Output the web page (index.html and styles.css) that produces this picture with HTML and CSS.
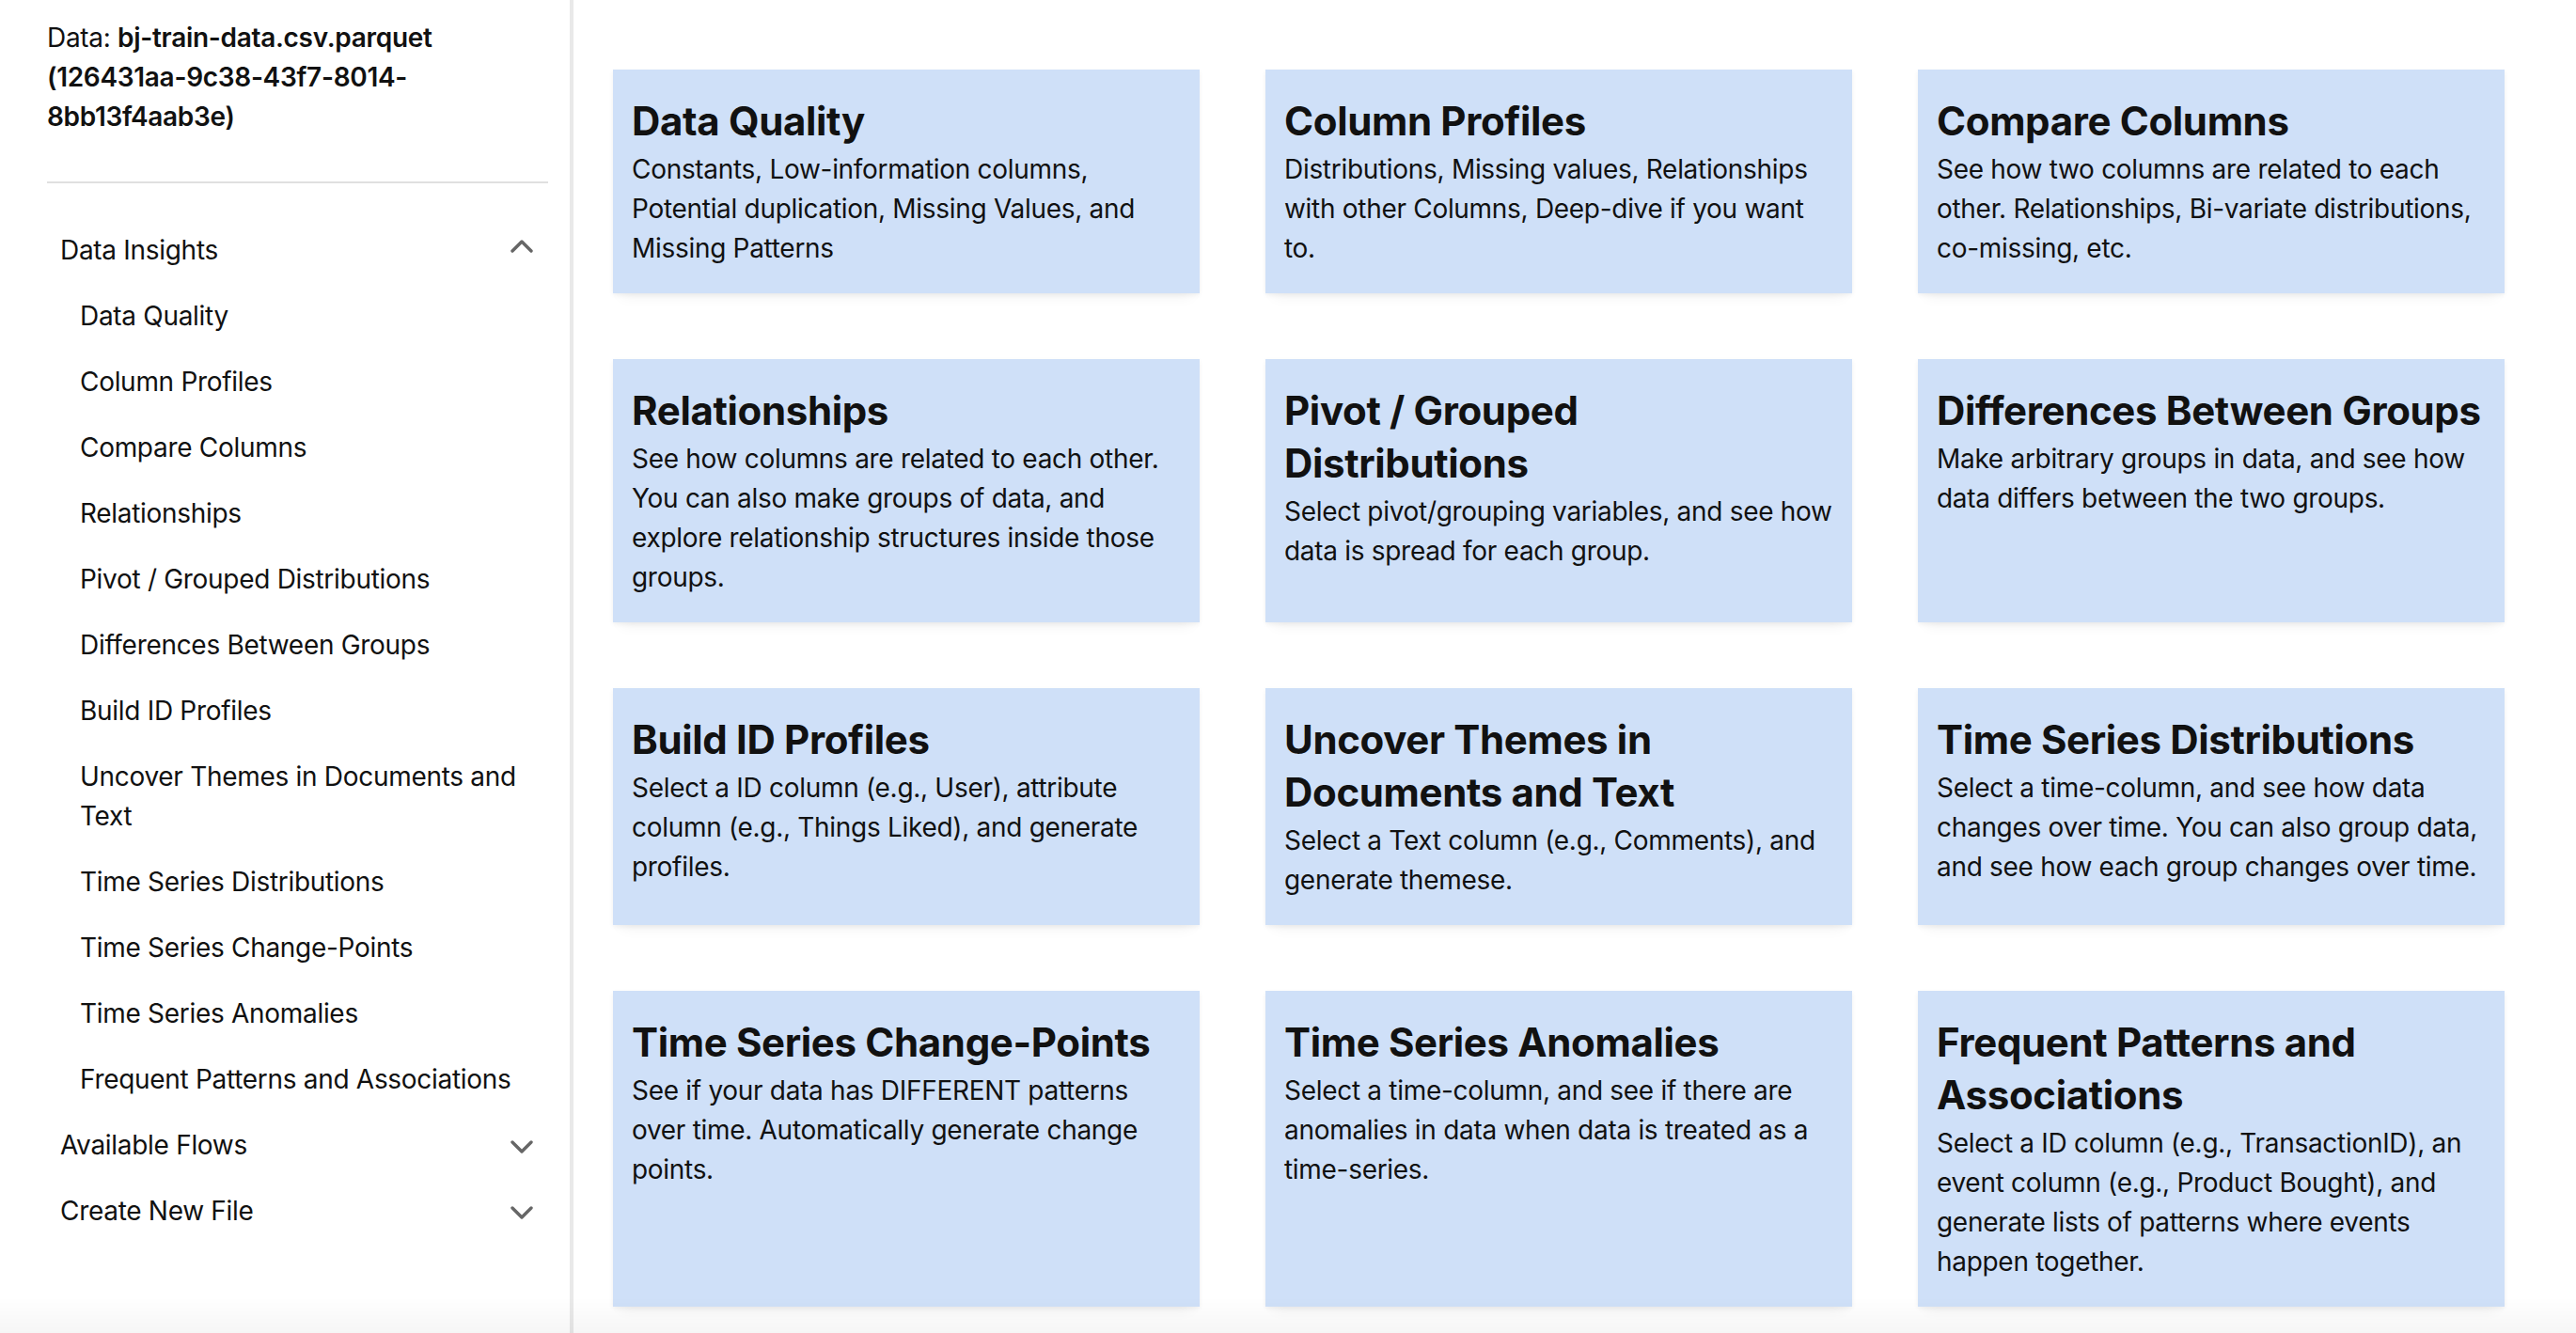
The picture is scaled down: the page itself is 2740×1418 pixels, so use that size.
FILE: index.html
```html
<!DOCTYPE html>
<html lang="en">
<head>
<meta charset="utf-8">
<title>Data Insights</title>
<link rel="stylesheet" href="styles.css">
</head>
<body>
<div class="app">
  <aside class="sidebar">
    <div class="data-info">Data: <strong>bj-train-data.csv.parquet (126431aa-9c38-43f7-8014-8bb13f4aab3e)</strong></div>
    <div class="divider"></div>
    <nav class="nav">
      <div class="nav-link">
        <span class="nav-label">Data Insights</span>
        <svg class="chev chev-up" viewBox="0 0 24 14" width="24" height="14"><polyline points="2,12 12,2 22,12"/></svg>
      </div>
      <div class="nav-children">
        <div class="nav-link child">Data Quality</div>
        <div class="nav-link child">Column Profiles</div>
        <div class="nav-link child">Compare Columns</div>
        <div class="nav-link child">Relationships</div>
        <div class="nav-link child">Pivot / Grouped Distributions</div>
        <div class="nav-link child">Differences Between Groups</div>
        <div class="nav-link child">Build ID Profiles</div>
        <div class="nav-link child">Uncover Themes in Documents and Text</div>
        <div class="nav-link child">Time Series Distributions</div>
        <div class="nav-link child">Time Series Change-Points</div>
        <div class="nav-link child">Time Series Anomalies</div>
        <div class="nav-link child">Frequent Patterns and Associations</div>
      </div>
      <div class="nav-link">
        <span class="nav-label">Available Flows</span>
        <svg class="chev chev-down" viewBox="0 0 24 14" width="24" height="14"><polyline points="2,2 12,12 22,2"/></svg>
      </div>
      <div class="nav-link">
        <span class="nav-label">Create New File</span>
        <svg class="chev chev-down" viewBox="0 0 24 14" width="24" height="14"><polyline points="2,2 12,12 22,2"/></svg>
      </div>
    </nav>
  </aside>
  <main class="main">
    <div class="grid">
      <div class="card">
        <h3 class="card-title">Data Quality</h3>
        <p class="card-text">Constants, Low-information columns, Potential duplication, Missing Values, and Missing Patterns</p>
      </div>
      <div class="card">
        <h3 class="card-title">Column Profiles</h3>
        <p class="card-text">Distributions, Missing values, Relationships with other Columns, Deep-dive if you want to.</p>
      </div>
      <div class="card">
        <h3 class="card-title">Compare Columns</h3>
        <p class="card-text">See how two columns are related to each other. Relationships, Bi-variate distributions, co-missing, etc.</p>
      </div>
      <div class="card">
        <h3 class="card-title">Relationships</h3>
        <p class="card-text">See how columns are related to each other. You can also make groups of data, and explore relationship structures inside those groups.</p>
      </div>
      <div class="card">
        <h3 class="card-title">Pivot / Grouped<br>Distributions</h3>
        <p class="card-text">Select pivot/grouping variables, and see how data is spread for each group.</p>
      </div>
      <div class="card">
        <h3 class="card-title">Differences Between Groups</h3>
        <p class="card-text">Make arbitrary groups in data, and see how data differs between the two groups.</p>
      </div>
      <div class="card">
        <h3 class="card-title">Build ID Profiles</h3>
        <p class="card-text">Select a ID column (e.g., User), attribute column (e.g., Things Liked), and generate profiles.</p>
      </div>
      <div class="card">
        <h3 class="card-title">Uncover Themes in Documents and Text</h3>
        <p class="card-text">Select a Text column (e.g., Comments), and generate themese.</p>
      </div>
      <div class="card">
        <h3 class="card-title">Time Series Distributions</h3>
        <p class="card-text">Select a time-column, and see how data changes over time. You can also group data, and see how each group changes over time.</p>
      </div>
      <div class="card">
        <h3 class="card-title">Time Series Change-Points</h3>
        <p class="card-text">See if your data has DIFFERENT patterns over time. Automatically generate change points.</p>
      </div>
      <div class="card">
        <h3 class="card-title">Time Series Anomalies</h3>
        <p class="card-text">Select a time-column, and see if there are anomalies in data when data is treated as a time-series.</p>
      </div>
      <div class="card">
        <h3 class="card-title">Frequent Patterns and Associations</h3>
        <p class="card-text">Select a ID column (e.g., TransactionID), an event column (e.g., Product Bought), and generate lists of patterns where events happen together.</p>
      </div>
    </div>
  </main>
</div>
<div class="bottom-fade"></div>
</body>
</html>
```

FILE: styles.css
```css
* {
  box-sizing: border-box;
}

html, body {
  margin: 0;
  padding: 0;
  height: 100%;
  background: #ffffff;
}

body {
  font-family: Inter, "Noto Sans", "Liberation Sans", sans-serif;
  font-size: 28px;
  line-height: 42px;
  letter-spacing: -0.3px;
  color: #111111;
  overflow: hidden;
}

.app {
  display: flex;
  min-height: 100vh;
}

/* Sidebar */
.sidebar {
  width: 610px;
  flex: 0 0 610px;
  border-right: 4px solid #e9e9e9;
  padding: 19px 23px 0 50px;
  min-height: 100vh;
}

.data-info {
  font-weight: 400;
}

.data-info strong {
  font-weight: 600;
}

.divider {
  height: 2px;
  background: #e0e0e0;
  margin-top: 48px;
}

.nav {
  margin-top: 36px;
}

.nav-link {
  display: flex;
  align-items: center;
  justify-content: space-between;
  padding: 14px 16px 14px 14px;
  color: #111111;
}

.nav-link.child {
  padding-left: 35px;
  padding-right: 21px;
}

.nav-label {
  flex: 1;
}

.chev {
  flex: 0 0 24px;
  fill: none;
  stroke: #666666;
  stroke-width: 3.4;
  stroke-linecap: round;
  stroke-linejoin: round;
}

.chev-up {
  transform: translateY(-4px);
}

.chev-down {
  transform: translateY(2px);
}

/* Main */
.main {
  flex: 1;
  padding: 74px 76px 0 42px;
}

.grid {
  display: grid;
  grid-template-columns: repeat(3, 624px);
  column-gap: 70px;
  row-gap: 70px;
  align-items: stretch;
}

.card {
  background: #cfe0f8;
  padding: 27px 20px 27px 20px;
  box-shadow: 0 2px 5px rgba(0, 0, 0, 0.06), 0 12px 14px -9px rgba(0, 0, 0, 0.06);
}

.card-title {
  margin: 0 0 2px 0;
  font-size: 42px;
  line-height: 56px;
  font-weight: 700;
  letter-spacing: -0.35px;
  color: #111111;
}

.card-text {
  margin: 0;
  font-size: 28px;
  line-height: 42px;
  color: #111111;
}

.bottom-fade {
  position: fixed;
  left: 0;
  right: 0;
  bottom: 0;
  height: 38px;
  background: linear-gradient(to bottom, rgba(0, 0, 0, 0), rgba(0, 0, 0, 0.035));
  pointer-events: none;
}
```
